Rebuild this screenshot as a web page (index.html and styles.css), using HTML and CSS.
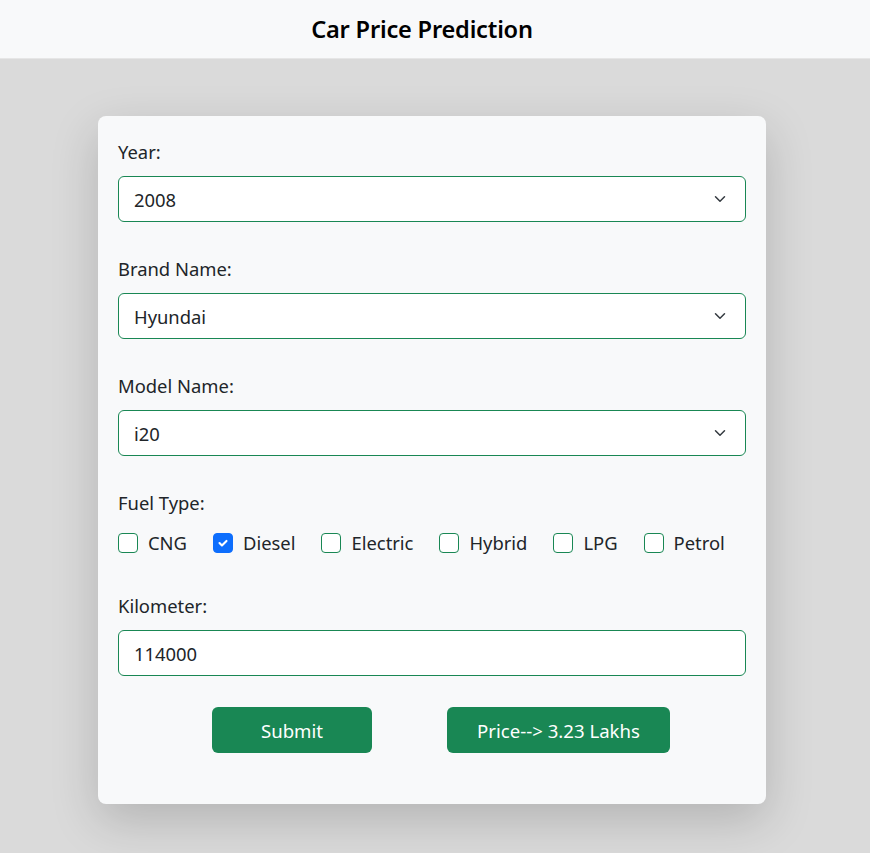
FILE: index.html
```html
<!DOCTYPE html>
<html lang="en">
<head>
<meta charset="utf-8">
<title>Car Price Prediction</title>
<link rel="stylesheet" href="styles.css">
</head>
<body>
<header class="topbar"><h1 class="title">Car Price Prediction</h1></header>
<main class="page">
  <form class="card">
    <div class="group">
      <label class="label">Year:</label>
      <div class="select-wrap">
        <select class="field"><option>2008</option></select>
        <svg class="chev" width="16" height="12" viewBox="0 0 16 16"><path d="m2 5 6 6 6-6" fill="none" stroke="#343a40" stroke-width="2" stroke-linecap="round" stroke-linejoin="round"/></svg>
      </div>
    </div>
    <div class="group">
      <label class="label">Brand Name:</label>
      <div class="select-wrap">
        <select class="field"><option>Hyundai</option></select>
        <svg class="chev" width="16" height="12" viewBox="0 0 16 16"><path d="m2 5 6 6 6-6" fill="none" stroke="#343a40" stroke-width="2" stroke-linecap="round" stroke-linejoin="round"/></svg>
      </div>
    </div>
    <div class="group">
      <label class="label">Model Name:</label>
      <div class="select-wrap">
        <select class="field"><option>i20</option></select>
        <svg class="chev" width="16" height="12" viewBox="0 0 16 16"><path d="m2 5 6 6 6-6" fill="none" stroke="#343a40" stroke-width="2" stroke-linecap="round" stroke-linejoin="round"/></svg>
      </div>
    </div>
    <div class="group group-fuel">
      <label class="label">Fuel Type:</label>
      <div class="checks">
        <span class="check"><span class="box"></span>CNG</span>
        <span class="check"><span class="box on"><svg width="14" height="14" viewBox="0 0 20 20"><path d="m5 10 3.5 3.5L15 7" fill="none" stroke="#fff" stroke-width="3" stroke-linecap="round" stroke-linejoin="round"/></svg></span>Diesel</span>
        <span class="check"><span class="box"></span>Electric</span>
        <span class="check"><span class="box"></span>Hybrid</span>
        <span class="check"><span class="box"></span>LPG</span>
        <span class="check"><span class="box"></span>Petrol</span>
      </div>
    </div>
    <div class="group group-km">
      <label class="label">Kilometer:</label>
      <input class="field" type="text" value="114000">
    </div>
    <div class="actions">
      <button type="button" class="btn btn-submit">Submit</button>
      <button type="button" class="btn btn-price">Price--&gt; 3.23 Lakhs</button>
    </div>
  </form>
</main>
</body>
</html>
```
FILE: styles.css
```css
* { box-sizing: border-box; }
html, body { margin: 0; padding: 0; }
body {
  background: #dadada;
  font-family: "Noto Sans", "Open Sans", sans-serif;
  color: #212529;
  min-height: 853px;
}
.topbar {
  height: 59px;
  background: #f8f9fa;
  border-bottom: 1px solid #e6e6e6;
  display: flex;
  align-items: center;
  justify-content: center;
  padding-right: 26px;
}
.title {
  margin: 0;
  font-size: 23.6px;
  font-weight: 600;
  color: #000;
  letter-spacing: -0.2px;
}
.page {
  display: flex;
  justify-content: center;
  padding-top: 57px;
  padding-right: 6px;
}
.card {
  width: 668px;
  background: #f8f9fa;
  border-radius: 8px;
  box-shadow: 0 16px 48px rgba(0,0,0,0.18);
  padding: 22px 20px 51px;
}
.group { margin-bottom: 33px; }
.label {
  display: block;
  font-size: 18.4px;
  line-height: 27px;
  margin-bottom: 11px;
  color: #212529;
}
.select-wrap { position: relative; }
.field {
  display: block;
  width: 100%;
  height: 46px;
  border: 1px solid #198754;
  border-radius: 6px;
  background: #fff;
  font-family: inherit;
  font-size: 18.4px;
  color: #212529;
  padding: 0 15px;
  appearance: none;
  -webkit-appearance: none;
  outline: none;
}
.chev {
  position: absolute;
  right: 18px;
  top: 17px;
  pointer-events: none;
}
.checks {
  display: flex;
  align-items: center;
  gap: 26px;
  font-size: 18.4px;
  line-height: 27px;
  padding-top: 2px;
}
.check {
  display: flex;
  align-items: center;
  gap: 10px;
}
.box {
  width: 20px;
  height: 20px;
  border: 1px solid #198754;
  border-radius: 4px;
  background: #fff;
  display: flex;
  align-items: center;
  justify-content: center;
}
.box.on {
  background: #0d6efd;
  border-color: #0d6efd;
}
.group-fuel { margin-bottom: 36px; }
.group-km { margin-bottom: 31px; }
.actions {
  display: flex;
  justify-content: center;
  gap: 75px;
  padding-left: 18px;
}
.btn {
  height: 46px;
  border: none;
  border-radius: 6px;
  background: #198754;
  color: #fff;
  font-family: inherit;
  font-size: 18.6px;
  padding: 0;
}
.btn-submit { width: 160px; }
.btn-price { width: 223px; }
```
